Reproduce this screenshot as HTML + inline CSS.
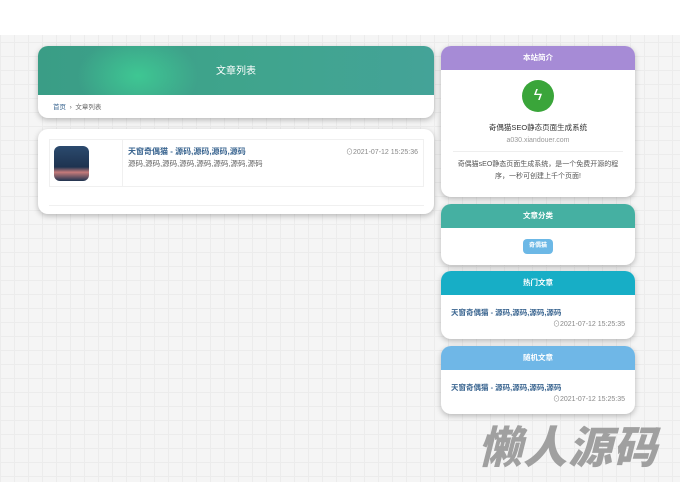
<!DOCTYPE html>
<html><head><meta charset="utf-8"><style>
*{margin:0;padding:0;box-sizing:border-box}
body{width:680px;height:482px;overflow:hidden;font-family:"Liberation Sans","Noto Sans CJK SC",sans-serif;font-size:7px;color:#555;
background-color:#f5f5f5;background-image:linear-gradient(#ececec 1px,transparent 1px),linear-gradient(90deg,#ececec 1px,transparent 1px);background-size:14px 14px;position:relative}
.top{position:absolute;left:0;top:0;width:680px;height:35px;background:#fff}
.card{position:absolute;background:#fff;border-radius:10px;box-shadow:0 2px 6px rgba(0,0,0,.25);overflow:hidden}
.hd{color:#fff;font-weight:bold;text-align:center;font-size:7.5px}
a{color:#3a6590;font-weight:bold;text-decoration:none;font-size:7.5px}
.t{color:#888;font-size:7px}
</style></head><body>
<div class="top"></div>
<div class="card" style="left:38px;top:46px;width:396px;height:72px">
 <div style="height:49px;background:radial-gradient(ellipse 60px 40px at 100px 30px,#3ec793,transparent),linear-gradient(90deg,#3a9d86,#3fa48c 50%,#44a398);color:#fff;text-align:center;line-height:52px;font-size:10px">文章列表</div>
 <div style="padding:6px 15px;font-size:6.5px;color:#666"><span style="color:#3a6590">首页</span> &nbsp;›&nbsp; 文章列表</div>
</div>
<div class="card" style="left:38px;top:129px;width:396px;height:85px">
 <div style="position:absolute;left:11px;top:10px;width:375px;height:48px;border:1px solid #f0f0f0"></div>
 <div style="position:absolute;left:84px;top:10px;width:1px;height:48px;background:#f0f0f0"></div>
 <div style="position:absolute;left:16px;top:17px;width:35px;height:35px;border-radius:6px;background:linear-gradient(#2b4a6e,#1e3350 60%,#c57a7a 75%,#1e3350)"></div>
 <div style="position:absolute;left:90px;top:17px"><a style="font-size:8px">天窗奇偶猫 - 源码,源码,源码,源码</a></div>
 <div style="position:absolute;left:90px;top:29px;color:#666;font-size:7.5px">源码,源码,源码,源码,源码,源码,源码,源码</div>
 <div class="t" style="position:absolute;right:16px;top:18px">⊙2021-07-12 15:25:36</div>
 <div style="position:absolute;left:11px;top:76px;width:375px;height:1px;background:#f0f0f0"></div>
</div>
<div class="card" style="left:441px;top:46px;width:194px;height:151px">
 <div class="hd" style="background:#a68bd6;height:24px;line-height:24px">本站简介</div>
 <div style="margin:10px auto 0;width:32px;height:32px;border-radius:50%;background:#3aa53a;color:#fff;text-align:center;line-height:32px;font-size:16px">ϟ</div>
 <div style="text-align:center;margin-top:10px;color:#333;font-size:7.5px">奇偶猫SEO静态页面生成系统</div>
 <div style="text-align:center;margin-top:4px;color:#999;font-size:7px">a030.xiandouer.com</div>
 <div style="margin:7px 12px 0;border-top:1px solid #eee"></div>
 <div style="text-align:center;margin-top:7px;padding:0 10px;color:#555;line-height:12px;font-size:7px">奇偶猫sEO静态页面生成系统，是一个免费开源的程序，一秒可创建上千个页面!</div>
</div>
<div class="card" style="left:441px;top:204px;width:194px;height:61px">
 <div class="hd" style="background:#45b0a2;height:24px;line-height:24px">文章分类</div>
 <div style="margin:11px auto 0;width:30px;height:15px;border-radius:4px;background:#6cb8e6;color:#fff;font-size:6px;text-align:center;line-height:15px;font-weight:bold">奇偶猫</div>
</div>
<div class="card" style="left:441px;top:271px;width:194px;height:68px">
 <div class="hd" style="background:#17aec6;height:24px;line-height:24px">热门文章</div>
 <div style="padding:12px 10px 0"><a>天窗奇偶猫 - 源码,源码,源码,源码</a></div>
 <div class="t" style="text-align:right;padding-right:10px;margin-top:1px">⊙2021-07-12 15:25:35</div>
</div>
<div class="card" style="left:441px;top:346px;width:194px;height:68px">
 <div class="hd" style="background:#6fb7e7;height:24px;line-height:24px">随机文章</div>
 <div style="padding:12px 10px 0"><a>天窗奇偶猫 - 源码,源码,源码,源码</a></div>
 <div class="t" style="text-align:right;padding-right:10px;margin-top:1px">⊙2021-07-12 15:25:35</div>
</div>
<div style="position:absolute;left:478px;top:421px;font-size:44px;font-weight:900;font-style:italic;color:#a0a0a0;letter-spacing:1px;line-height:55px">懒人源码</div>
</body></html>
